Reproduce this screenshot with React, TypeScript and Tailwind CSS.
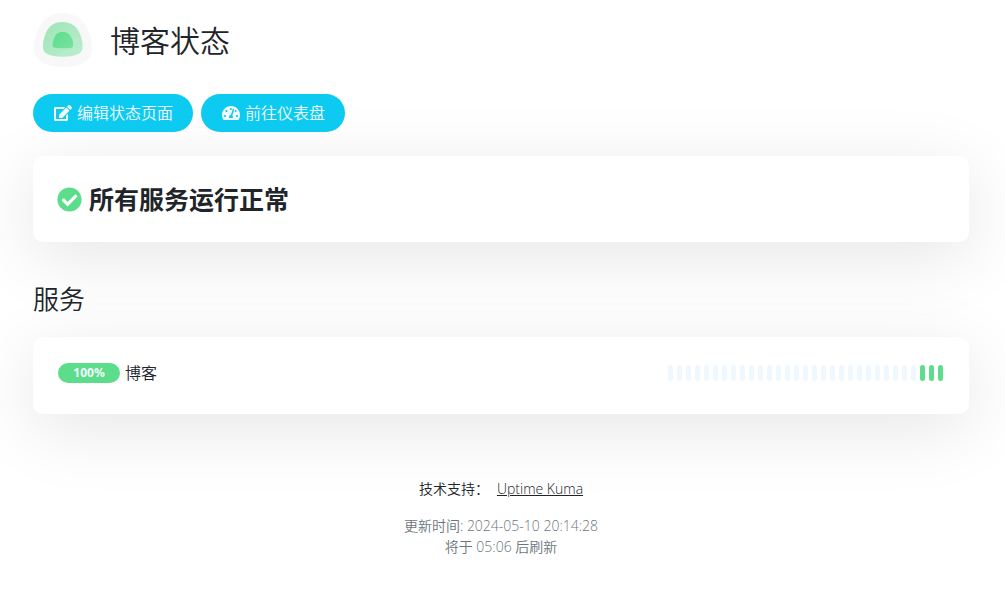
import { FaCheckCircle, FaEdit, FaTachometerAlt } from "react-icons/fa";

type Beat = "empty" | "up";

const BEATS: Beat[] = [...Array<Beat>(28).fill("empty"), "up", "up", "up"];

const MONITORS = [{ name: "博客", uptime: "100%", beats: BEATS }];

const CARD = "rounded-[10px] bg-white shadow-[0_15px_70px_rgba(0,0,0,0.1)]";
const PILL_BUTTON =
  "flex h-[38px] items-center gap-[5px] rounded-full bg-[#0dcaf0] pr-5 pl-[21px] text-base font-[350] text-[#f0faff]";

function Logo() {
  return (
    <svg viewBox="0 0 58 54" className="h-[54px] w-[58px]" aria-hidden="true">
      <defs>
        <linearGradient id="logo-mid" x1="0" y1="0" x2="1" y2="1">
          <stop offset="0" stopColor="#9de5b8" />
          <stop offset="1" stopColor="#bdedce" />
        </linearGradient>
        <linearGradient id="logo-core" x1="0" y1="0" x2="1" y2="1">
          <stop offset="0" stopColor="#5cdd8b" />
          <stop offset="1" stopColor="#78e2a0" />
        </linearGradient>
      </defs>
      <path
        d="M28 0C39 0 48 5 53 15C56 21 58 28 58 35C58 48 46 54 29 54C12 54 0 48 0 35C0 28 2 21 5 15C10 5 18 0 28 0Z"
        fill="#f8f8f8"
      />
      <path
        d="M28 9C37 9 43 13 46 21C48 26 49 30 48.500 35C48 41 41 43.700 29 43.700C17 43.700 9.500 41 9 35C8.700 30 9.500 26 11.500 21C14.500 13 20 9 28 9Z"
        fill="url(#logo-mid)"
      />
      <path
        d="M28.500 19C33 19 36 21 38 25.500C39 28 39.200 30.500 39 33.500C38.500 35 35 35.200 29 35.200C23 35.200 19 35 18.700 33.500C18.500 30.500 19 28 20 25.500C21.500 21 24.500 19 28.500 19Z"
        fill="url(#logo-core)"
      />
    </svg>
  );
}

function HeartbeatBar({ beats }: { beats: Beat[] }) {
  return (
    <div className="flex gap-1" role="img" aria-label="心跳">
      {beats.map((beat, i) => (
        <span
          key={i}
          className={
            beat === "up"
              ? "h-4 w-[5px] rounded-full bg-[#5cdd8b]"
              : "h-4 w-[5px] rounded-full bg-[#f0f8ff]"
          }
        />
      ))}
    </div>
  );
}

export default function App() {
  return (
    <div className="min-h-screen overflow-hidden bg-white pr-9 pl-[33px] font-['Open_Sans','Noto_Sans_CJK_SC',sans-serif] text-[#212529]">
      <header className="flex items-center gap-[18px] pt-[13px] pl-px">
        <Logo />
        <h1 className="pt-0.5 text-[30px] leading-9 font-[350]">博客状态</h1>
      </header>

      <div className="mt-[27px] flex gap-2">
        <button type="button" className={PILL_BUTTON}>
          <FaEdit className="h-4 w-[18px]" />
          编辑状态页面
        </button>
        <button type="button" className={PILL_BUTTON}>
          <FaTachometerAlt className="h-4 w-[18px]" />
          前往仪表盘
        </button>
      </div>

      <section className={`${CARD} mt-6 flex items-center gap-[7px] p-6`}>
        <FaCheckCircle className="size-[25px] text-[#5cdd8b]" />
        <strong className="text-[25px] leading-[38px] font-bold">所有服务运行正常</strong>
      </section>

      <h2 className="mt-[41px] text-[26px] leading-8 font-[350]">服务</h2>

      <ul className={`${CARD} mt-[22px] pt-6 pr-[26px] pb-[29px] pl-[25px]`}>
        {MONITORS.map((monitor) => (
          <li key={monitor.name} className="flex items-center justify-between">
            <div className="flex items-center gap-[5px]">
              <span className="w-[62px] rounded-full bg-[#5cdd8b] text-center text-xs leading-5 font-bold text-[#f0faff]">
                {monitor.uptime}
              </span>
              <span className="text-base leading-6 font-[350]">{monitor.name}</span>
            </div>
            <HeartbeatBar beats={monitor.beats} />
          </li>
        ))}
      </ul>

      <footer className="mt-16 text-center text-sm leading-[21px] font-[350]">
        <p className="flex justify-center gap-2">
          <span>技术支持：</span>
          <a href="#" className="underline">
            Uptime Kuma
          </a>
        </p>
        <div className="mt-4 text-[#6c757d]">
          <p>更新时间: 2024-05-10 20:14:28</p>
          <p>将于 05:06 后刷新</p>
        </div>
      </footer>
    </div>
  );
}
